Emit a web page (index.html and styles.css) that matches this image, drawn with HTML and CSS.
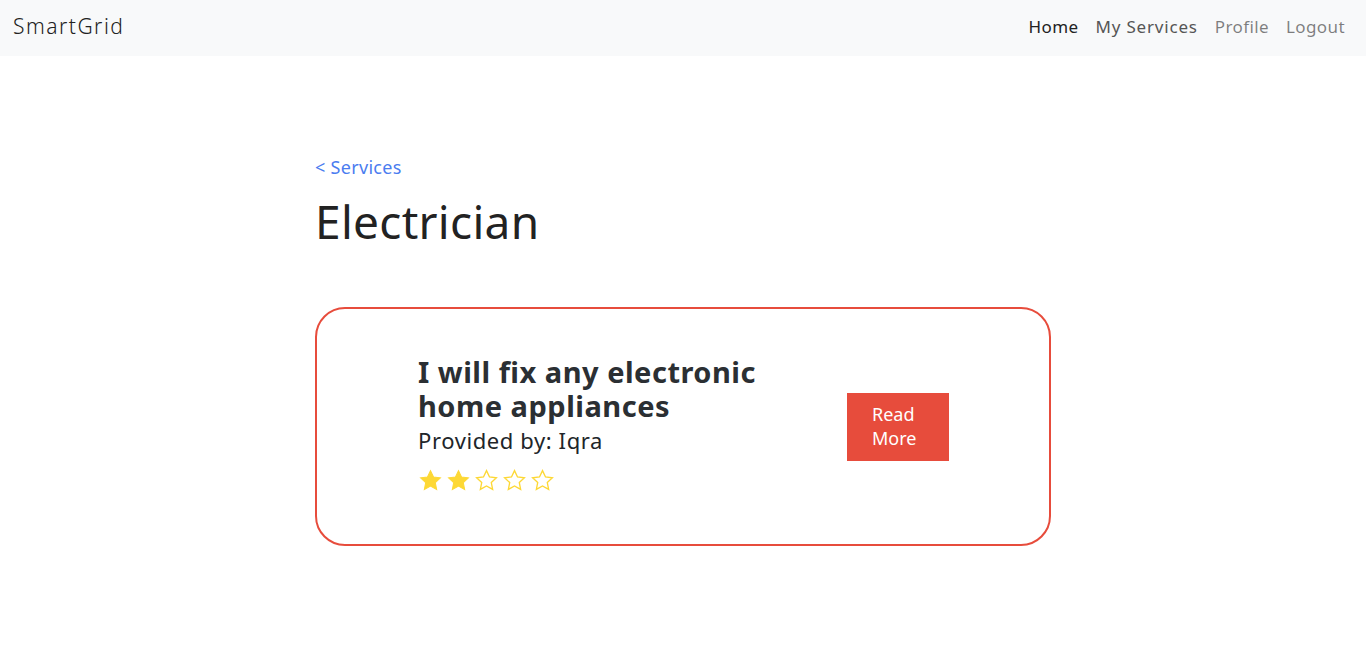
FILE: index.html
```html
<!DOCTYPE html>
<html lang="en">
<head>
<meta charset="utf-8">
<title>SmartGrid</title>
<link rel="stylesheet" href="styles.css">
</head>
<body>
<nav class="navbar">
  <a class="brand" href="#">SmartGrid</a>
  <ul class="nav-links">
    <li><a class="nav-link active" href="#">Home</a></li>
    <li><a class="nav-link mid" href="#">My Services</a></li>
    <li><a class="nav-link" href="#">Profile</a></li>
    <li><a class="nav-link" href="#">Logout</a></li>
  </ul>
</nav>
<main class="container">
  <a class="back" href="#">&lt; Services</a>
  <h1 class="title">Electrician</h1>
  <div class="card">
    <div class="card-info">
      <h2 class="card-title">I will fix any electronic home appliances</h2>
      <p class="provider">Provided by: Iqra</p>
      <div class="stars">
        <svg class="star" viewBox="0 0 24 24"><path class="full" d="M12 2.5l2.9 6.1 6.6.8-4.9 4.6 1.3 6.6L12 17.3l-5.9 3.3 1.3-6.6-4.9-4.6 6.6-.8z"/></svg>
        <svg class="star" viewBox="0 0 24 24"><path class="full" d="M12 2.5l2.9 6.1 6.6.8-4.9 4.6 1.3 6.6L12 17.3l-5.9 3.3 1.3-6.6-4.9-4.6 6.6-.8z"/></svg>
        <svg class="star" viewBox="0 0 24 24"><path class="empty" d="M12 2.5l2.9 6.1 6.6.8-4.9 4.6 1.3 6.6L12 17.3l-5.9 3.3 1.3-6.6-4.9-4.6 6.6-.8z"/></svg>
        <svg class="star" viewBox="0 0 24 24"><path class="empty" d="M12 2.5l2.9 6.1 6.6.8-4.9 4.6 1.3 6.6L12 17.3l-5.9 3.3 1.3-6.6-4.9-4.6 6.6-.8z"/></svg>
        <svg class="star" viewBox="0 0 24 24"><path class="empty" d="M12 2.5l2.9 6.1 6.6.8-4.9 4.6 1.3 6.6L12 17.3l-5.9 3.3 1.3-6.6-4.9-4.6 6.6-.8z"/></svg>
      </div>
    </div>
    <a class="btn" href="#">Read More</a>
  </div>
</main>
</body>
</html>
```
FILE: styles.css
```css
* { box-sizing: border-box; }
body {
  margin: 0;
  font-family: "Noto Sans", sans-serif;
  color: #212529;
  background: #fff;
}
a { text-decoration: none; }
.navbar {
  height: 56px;
  background: #f8f9fa;
  display: flex;
  align-items: center;
  justify-content: space-between;
  padding: 0 13px 4px 13px;
}
.brand {
  font-size: 21px;
  letter-spacing: 1.5px;
  color: #222;
  font-weight: 300;
}
.nav-links {
  list-style: none;
  margin: 0;
  padding: 0;
  display: flex;
}
.nav-link {
  display: block;
  padding: 0 8px 0 9px;
  font-size: 17px;
  letter-spacing: 0.4px;
  color: rgba(0,0,0,.5);
}
.nav-link.active { color: #222; }
.nav-link.mid { color: #555; letter-spacing: 0.8px; }
.container {
  width: 736px;
  margin: 0 auto;
  padding-top: 99px;
}
.back {
  display: block;
  color: #4a7cf0;
  font-size: 18px;
  letter-spacing: 0.3px;
  line-height: 24px;
}
.title {
  margin: 14px 0 0;
  font-size: 46px;
  font-weight: 400;
  letter-spacing: 0.3px;
  line-height: 56px;
  color: #222;
}
.card {
  margin-top: 58px;
  height: 239px;
  border: 2px solid #e74c3c;
  border-radius: 30px;
  display: flex;
  align-items: center;
  padding: 0 100px 0 101px;
  justify-content: space-between;
}
.card-info { width: 360px; margin-bottom: 5px; }
.card-title {
  margin: 0;
  font-size: 29px;
  letter-spacing: 0.5px;
  line-height: 34px;
  font-weight: 700;
  color: #2b2f33;
}
.provider {
  margin: 2px 0 0;
  font-size: 22px;
  letter-spacing: 0.6px;
  line-height: 30px;
}
.stars {
  display: flex;
  gap: 3px;
  margin-top: 13px;
}
.star { width: 25px; height: 25px; }
.full { fill: #fdd835; stroke: #fdd835; stroke-width: 1; }
.empty { fill: none; stroke: #fdd835; stroke-width: 1.3; }
.btn {
  width: 102px;
  height: 68px;
  background: #e74c3c;
  color: #fff;
  font-size: 18px;
  line-height: 24px;
  padding: 9px 25px;
  display: block;
}
```
